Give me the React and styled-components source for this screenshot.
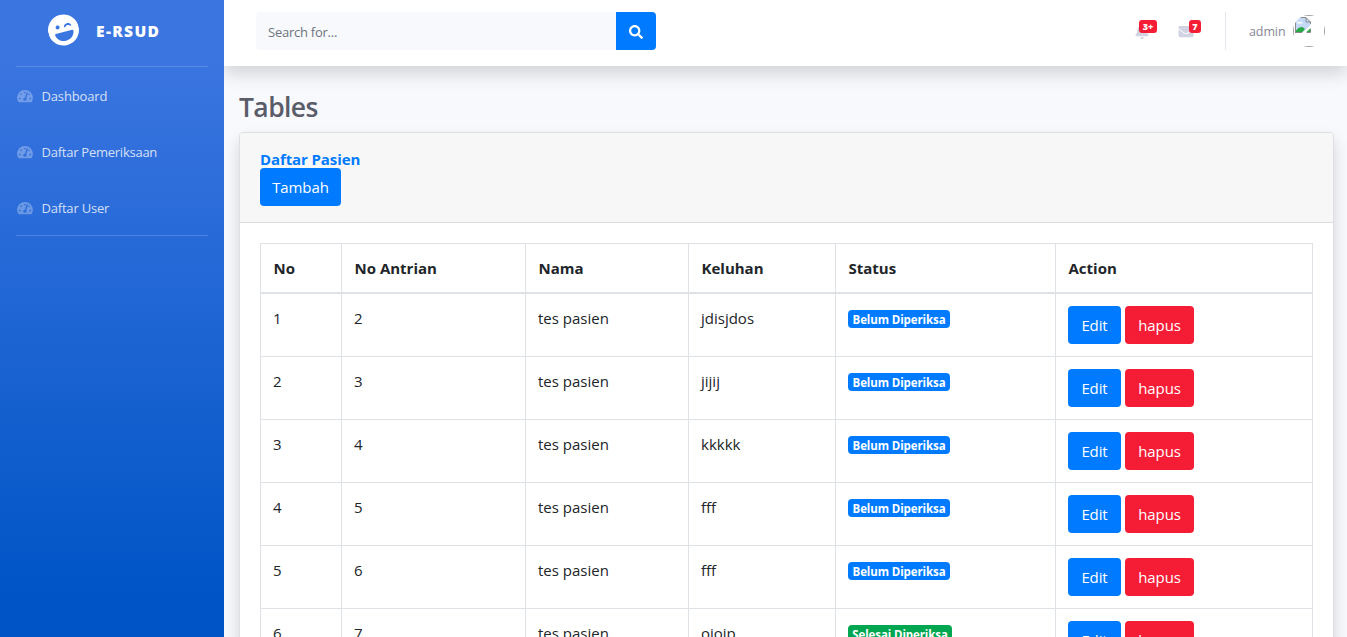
import React from 'react';
import styled, { createGlobalStyle } from 'styled-components';
import { FaLaughWink, FaTachometerAlt, FaBell, FaEnvelope, FaSearch } from 'react-icons/fa';

const GlobalStyle = createGlobalStyle`
  *, *::before, *::after { box-sizing: border-box; }
  html, body { margin: 0; height: 637px; overflow: hidden; }
  body {
    font-family: "Open Sans", "Noto Sans", sans-serif;
    font-size: 15px;
    line-height: 24px;
    color: #212529;
    background: #fff;
  }
`;

const Page = styled.div`
  display: flex;
  height: 637px;
  overflow: hidden;
`;

const Sidebar = styled.nav`
  flex: 0 0 224px;
  display: flex;
  flex-direction: column;
  background: linear-gradient(180deg, #3a75e0 10%, #0054c6 94%);
`;

const Brand = styled.a`
  display: flex;
  align-items: center;
  height: 66px;
  padding: 0 0 6px 48px;
  color: #fff;
`;

const BrandIcon = styled.span`
  display: flex;
  transform: rotate(-15deg);
  svg { width: 31px; height: 32px; }
`;

const BrandName = styled.span`
  margin: 2px 0 0 17px;
  font-size: 15.6px;
  font-weight: 800;
  letter-spacing: 1.35px;
`;

const SidebarRule = styled.hr`
  width: 192px;
  height: 1px;
  margin: 0 16px;
  border: 0;
  background: rgba(255, 255, 255, 0.17);
`;

const NavList = styled.div`
  display: flex;
  flex-direction: column;
  padding-top: 1px;
  margin-bottom: -1px;
`;

const NavLink = styled.a`
  display: flex;
  align-items: center;
  height: 56px;
  padding: 0 16.5px;
  gap: 9px;
  font-size: 13px;
  letter-spacing: ${(p) => p.$spacing || '0'};
  color: rgba(255, 255, 255, 0.8);
  svg { width: 16px; height: 14px; color: rgba(255, 255, 255, 0.3); }
`;

const Content = styled.div`
  flex: 1;
  min-width: 0;
  display: flex;
  flex-direction: column;
  overflow: hidden;
  background: #f8f9fc;
`;

const Topbar = styled.header`
  position: relative;
  display: flex;
  justify-content: space-between;
  flex: 0 0 66px;
  padding: 12px 22px 16px 32px;
  background: #fff;
  box-shadow: 0 8px 16px rgba(0, 0, 0, 0.15);
`;

const SearchForm = styled.div`
  display: flex;
  width: 400px;
  height: 38px;
  border-radius: 4px;
  overflow: hidden;
`;

const SearchField = styled.div`
  flex: 1;
  padding: 1px 12px 0;
  background: #f8f9fc;
  color: #6c757d;
  font-size: 13px;
  line-height: 38px;
  letter-spacing: -0.25px;
`;

const SearchButton = styled.button`
  display: flex;
  align-items: center;
  justify-content: center;
  width: 40px;
  padding: 2px 0 0;
  border: 0;
  background: #007bff;
  color: #fff;
  svg { width: 14px; height: 14px; }
`;

const Tools = styled.div`
  display: flex;
  align-items: center;
  height: 38px;
`;

const Alert = styled.span`
  position: relative;
  display: flex;
  width: 16px;
  margin-right: ${(p) => p.$gap};
  color: #d1d3e2;
  svg { width: ${(p) => p.$icon}; height: 15px; }
`;

const Counter = styled.span`
  position: absolute;
  top: -4px;
  left: ${(p) => p.$left};
  width: ${(p) => p.$width};
  height: 13px;
  border-radius: 3px;
  background: #f51d36;
  color: #fff;
  font-size: 9px;
  font-weight: 800;
  line-height: 14px;
  text-align: center;
`;

const ToolRule = styled.span`
  width: 1px;
  height: 38px;
  margin-right: 23px;
  background: #e3e6f0;
`;

const UserName = styled.span`
  width: 37px;
  margin: 2px 7px 0 0;
  color: #858796;
  font-size: 12.5px;
  letter-spacing: -0.1px;
  white-space: nowrap;
`;

const Avatar = styled.span`
  display: block;
  width: 32px;
  height: 32px;
  border-radius: 50%;
  overflow: hidden;
`;

const AvatarFrame = styled.span`
  display: block;
  width: 32px;
  height: 32px;
  padding: 1px;
  border: 1px solid #a5a5a5;
  svg { display: block; }
`;

const Main = styled.main`
  padding: 25px 13px 0 15px;
`;

const Title = styled.h1`
  margin: 0 0 8px;
  font-size: 26.5px;
  font-weight: 600;
  line-height: 33px;
  letter-spacing: -0.6px;
  color: #5a5c69;
`;

const Card = styled.section`
  height: 700px;
  border: 1px solid #dfdfdf;
  border-radius: 4px;
  background: #fff;
  box-shadow: 0 8px 16px rgba(0, 0, 0, 0.15);
`;

const CardHeader = styled.div`
  display: flex;
  flex-direction: column;
  align-items: flex-start;
  height: 90px;
  padding: 16px 20px 0;
  border-bottom: 1px solid #dcdcdc;
  border-radius: 3px 3px 0 0;
  background: #f7f7f7;
`;

const CardTitle = styled.h6`
  margin: 0;
  height: 19px;
  font-size: 15px;
  font-weight: 700;
  line-height: 21px;
  letter-spacing: -0.1px;
  color: #007bff;
`;

const Button = styled.button`
  width: ${(p) => p.$width};
  height: 38px;
  margin: 0 4px 0 0;
  padding: 0 0 1px;
  border: 0;
  border-radius: 4px;
  background: ${(p) => (p.$danger ? '#f51d36' : '#007bff')};
  color: #fff;
  font: inherit;
  letter-spacing: -0.1px;
`;

const Actions = styled.div`
  display: flex;
`;

const CardBody = styled.div`
  padding: 20px;
`;

const Table = styled.table`
  width: 1053px;
  table-layout: fixed;
  border-collapse: collapse;
`;

const Column = styled.col`
  width: ${(p) => p.$width}px;
`;

const HeadCell = styled.th`
  height: 48px;
  padding: 12px 12px 12px 12.5px;
  border: 1px solid #dee2e6;
  border-bottom-width: 2px;
  text-align: left;
  font-weight: 700;
  letter-spacing: 0;
`;

const Cell = styled.td`
  padding: 12px;
  border: 1px solid #dee2e6;
  vertical-align: top;
`;

const Badge = styled.span`
  display: block;
  width: ${(p) => (p.$done ? '104px' : '102px')};
  height: 18px;
  margin-top: 4px;
  border-radius: 4px;
  background: ${(p) => (p.$done ? '#00a650' : '#007bff')};
  color: #fff;
  font-size: 11.5px;
  font-weight: 700;
  line-height: 19px;
  letter-spacing: -0.1px;
  text-align: center;
  white-space: nowrap;
`;

const BrokenImage = () => (
  <svg width="16" height="16" viewBox="0 0 16 16">
    <path d="M0.5 0.5H11L15.5 5V8L7.5 15.5H0.5Z" fill="#c3d9f7" />
    <path d="M2 6.5a1.8 1.8 0 0 1 3-1.6 2 2 0 0 1 2.6 1.6z" fill="#fff" />
    <path d="M1 15V13.5Q6 7.5 10 12L7 15.500Z" fill="#27a844" />
    <path d="M0.5 16V0.500H11L15.500 5V7M11 0.500V5H15.500M0.500 15.500H7M11.500 15.500H15.500V11.500" fill="none" stroke="#8a8a8a" />
    <path d="M11.500 15L15 11.500V15Z" fill="#27a844" />
  </svg>
);

const menu = [
  { label: 'Dashboard', spacing: '-0.15px' },
  { label: 'Daftar Pemeriksaan', spacing: '-0.25px' },
  { label: 'Daftar User', spacing: '-0.2px' },
];

const columns = [
  ['No', 81],
  ['No Antrian', 184],
  ['Nama', 163],
  ['Keluhan', 147],
  ['Status', 220],
  ['Action', 257],
];

const patients = [
  { antrian: 2, keluhan: 'jdisjdos' },
  { antrian: 3, keluhan: 'jijij' },
  { antrian: 4, keluhan: 'kkkkk' },
  { antrian: 5, keluhan: 'fff' },
  { antrian: 6, keluhan: 'fff' },
  { antrian: 7, keluhan: 'ojojp', done: true },
];

export default function App() {
  return (
    <Page>
      <GlobalStyle />
      <Sidebar>
        <Brand>
          <BrandIcon><FaLaughWink /></BrandIcon>
          <BrandName>E-RSUD</BrandName>
        </Brand>
        <SidebarRule />
        <NavList>
          {menu.map((item) => (
            <NavLink key={item.label} $spacing={item.spacing}>
              <FaTachometerAlt />
              {item.label}
            </NavLink>
          ))}
        </NavList>
        <SidebarRule />
      </Sidebar>
      <Content>
        <Topbar>
          <SearchForm>
            <SearchField>Search for...</SearchField>
            <SearchButton aria-label="Search"><FaSearch /></SearchButton>
          </SearchForm>
          <Tools>
            <Alert $gap="27px" $icon="14px">
              <FaBell />
              <Counter $left="4px" $width="18px">3+</Counter>
            </Alert>
            <Alert $gap="31px" $icon="16px">
              <FaEnvelope />
              <Counter $left="11px" $width="12px">7</Counter>
            </Alert>
            <ToolRule />
            <UserName>admin</UserName>
            <Avatar><AvatarFrame><BrokenImage /></AvatarFrame></Avatar>
          </Tools>
        </Topbar>
        <Main>
          <Title>Tables</Title>
          <Card>
            <CardHeader>
              <CardTitle>Daftar Pasien</CardTitle>
              <Button $width="81px">Tambah</Button>
            </CardHeader>
            <CardBody>
              <Table>
                <colgroup>
                  {columns.map(([name, width]) => <Column key={name} $width={width} />)}
                </colgroup>
                <thead>
                  <tr>{columns.map(([name]) => <HeadCell key={name}>{name}</HeadCell>)}</tr>
                </thead>
                <tbody>
                  {patients.map((p, i) => (
                    <tr key={p.antrian}>
                      <Cell>{i + 1}</Cell>
                      <Cell>{p.antrian}</Cell>
                      <Cell>tes pasien</Cell>
                      <Cell>{p.keluhan}</Cell>
                      <Cell><Badge $done={p.done}>{p.done ? 'Selesai Diperiksa' : 'Belum Diperiksa'}</Badge></Cell>
                      <Cell>
                        <Actions>
                          <Button $width="53px">Edit</Button>
                          <Button $width="69px" $danger>hapus</Button>
                        </Actions>
                      </Cell>
                    </tr>
                  ))}
                </tbody>
              </Table>
            </CardBody>
          </Card>
        </Main>
      </Content>
    </Page>
  );
}
